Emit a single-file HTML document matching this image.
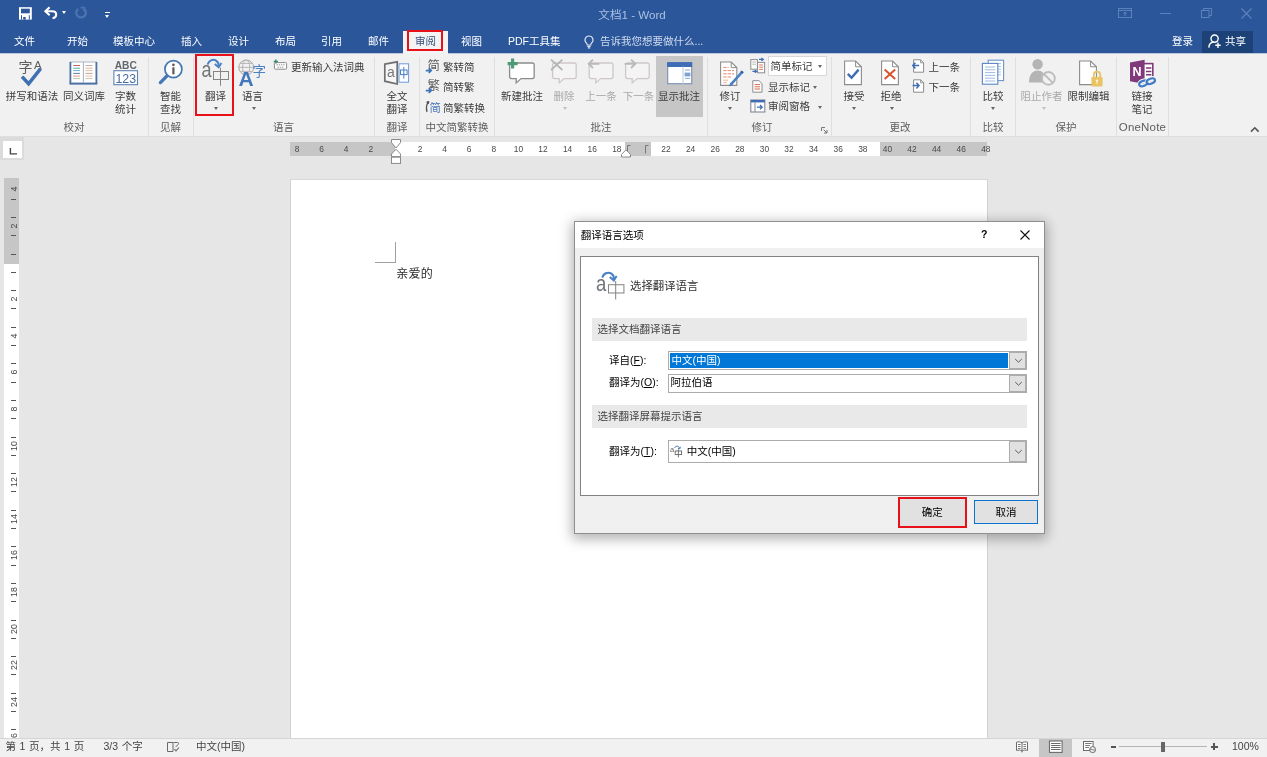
<!DOCTYPE html>
<html lang="zh-CN">
<head>
<meta charset="utf-8">
<title>文档1 - Word</title>
<style>
*{box-sizing:border-box;margin:0;padding:0}
html,body{width:1267px;height:757px;overflow:hidden;background:#e6e6e6}
body{font-family:"Liberation Sans","Noto Sans CJK SC",sans-serif;font-size:10.5px;color:#444;position:relative}
.abs{position:absolute}
#top{position:absolute;left:0;top:0;width:1267px;height:53px;background:#2b579a}
#title{position:absolute;left:532px;top:6px;width:200px;text-align:center;color:#a9c0e3;font-size:11.6px;line-height:17px;white-space:nowrap}
.tab{position:absolute;top:33px;height:16px;line-height:16px;color:#fff;font-size:10.5px;white-space:nowrap}
#tabsel{position:absolute;left:403px;top:30.5px;width:45px;height:24px;background:#f3f3f3}
#ribbon{position:absolute;left:0;top:54px;width:1267px;height:83px;background:#f1f1f1;border-bottom:1px solid #dedede}
.lbl{position:absolute;width:90px;margin-left:-45px;font-size:10.5px;line-height:13px;color:#3b3b3b;white-space:nowrap;text-align:center}
.lbl.dis{color:#a9a9a9}
.sl{position:absolute;font-size:10.5px;line-height:14px;color:#3b3b3b;white-space:nowrap}
.grp{position:absolute;top:120px;width:90px;margin-left:-45px;font-size:10.5px;line-height:14px;color:#5e5e5e;white-space:nowrap;text-align:center}
.sep{position:absolute;top:57px;width:1px;height:79px;background:#dfdfdf}
.red{position:absolute;border:2px solid #e8111a}
.arr{position:absolute;width:0;height:0;margin-left:-2.5px;border-left:2.5px solid transparent;border-right:2.5px solid transparent;border-top:3px solid #666}
.arr.dis{border-top-color:#c0c0c0}
#status{position:absolute;left:0;top:738px;width:1267px;height:19px;background:#f1f1f1;border-top:1px solid #d5d5d5}
#status span{position:absolute;top:-1px;line-height:16px;font-size:10.5px;color:#444;white-space:nowrap;word-spacing:.7px}
#page{position:absolute;left:290px;top:179px;width:698px;height:559px;background:#fff;border-left:1px solid #d2d2d2;border-right:1px solid #d2d2d2;border-top:1px solid #d8d8d8}
svg{position:absolute;overflow:visible}
</style>
</head>
<body>
<div id="wrap" style="position:absolute;left:0;top:0;width:1267px;height:757px;will-change:transform;opacity:.999">
<div id="top"></div>
<div id="title">文档1 - Word</div>
<div id="tabsel"></div>
<div class="tab" style="left:14px">文件</div>
<div class="tab" style="left:67px">开始</div>
<div class="tab" style="left:113px">模板中心</div>
<div class="tab" style="left:181px">插入</div>
<div class="tab" style="left:228px">设计</div>
<div class="tab" style="left:275px">布局</div>
<div class="tab" style="left:321px">引用</div>
<div class="tab" style="left:368px">邮件</div>
<div class="tab" style="left:415px;color:#38507a">审阅</div>
<div class="tab" style="left:461px">视图</div>
<div class="tab" style="left:508px">PDF工具集</div>
<div class="tab" style="left:600px;color:#cfdaee">告诉我您想要做什么...</div>
<div class="tab" style="left:1172px">登录</div>
<div class="abs" style="left:1202px;top:31px;width:51px;height:22px;background:#1d4277"></div>
<div class="tab" style="left:1225px">共享</div>
<div class="red" style="left:407.3px;top:30.2px;width:36.2px;height:20.6px;border-width:2.4px"></div>
<svg style="left:19px;top:7px" width="13" height="13" viewBox="0 0 13 13"><rect x="0" y="0.2" width="12.8" height="12.4" fill="#fff"/><rect x="2" y="1.7" width="8.8" height="4.6" fill="#2b579a"/><rect x="2" y="8.2" width="1" height="4.4" fill="#2b579a"/><rect x="9.8" y="8.2" width="1" height="4.4" fill="#2b579a"/><rect x="4.2" y="10" width="2.5" height="2.6" fill="#2b579a"/></svg>
<svg style="left:44px;top:6px" width="14" height="14" viewBox="0 0 14 14"><path d="M2 5.2H8.2C11 5.2 12.2 7 12.2 8.6C12.2 10.6 10.6 12 8.6 12.2" fill="none" stroke="#fff" stroke-width="2.1"/><path d="M5.6 1.2L1.4 5.2L5.6 9.2" fill="none" stroke="#fff" stroke-width="2.1"/></svg>
<div class="arr" style="left:64.5px;top:11px;border-top-color:#fff"></div>
<svg style="left:75px;top:7px" width="12" height="12" viewBox="0 0 12 12"><path d="M8.6 1.6A4.8 4.8 0 1 1 3.2 1.8" fill="none" stroke="#4d74b0" stroke-width="2.2"/><path d="M5.6 0.6H9.4V4.4" fill="none" stroke="#4d74b0" stroke-width="1.8"/></svg>
<div class="abs" style="left:104.5px;top:12px;width:5px;height:1.3px;background:#fff"></div>
<div class="arr" style="left:107px;top:15px;border-top-color:#fff"></div>
<svg style="left:1118px;top:8px" width="14" height="10" viewBox="0 0 14 10"><rect x="0.5" y="0.5" width="13" height="9" fill="none" stroke="#5c82bd" stroke-width="1"/><path d="M0.5 2.5H13.5" stroke="#5c82bd" stroke-width="1"/><path d="M7 4V8M5.2 5.8L7 4L8.8 5.8" fill="none" stroke="#5c82bd" stroke-width="1"/></svg>
<div class="abs" style="left:1160px;top:13px;width:11px;height:1px;background:#5c82bd"></div>
<svg style="left:1201px;top:8px" width="11" height="10" viewBox="0 0 11 10"><rect x="0.5" y="2.5" width="7.5" height="7" fill="none" stroke="#5c82bd" stroke-width="1"/><path d="M2.5 2.5V0.5H10.5V7.5H8" fill="none" stroke="#5c82bd" stroke-width="1"/></svg>
<svg style="left:1241px;top:8px" width="11" height="11" viewBox="0 0 11 11"><path d="M0.5 0.5L10.5 10.5M10.5 0.5L0.5 10.5" stroke="#5c82bd" stroke-width="1.1"/></svg>
<svg style="left:584px;top:35px" width="10" height="14" viewBox="0 0 10 14"><path d="M5 1A4 4 0 0 0 2.6 8.2C3 8.6 3.2 9.2 3.2 10H6.8C6.8 9.2 7 8.6 7.4 8.2A4 4 0 0 0 5 1Z" fill="none" stroke="#dfe7f4" stroke-width="1.1"/><path d="M3.4 11.4H6.6M3.8 12.9H6.2" stroke="#dfe7f4" stroke-width="1.1"/></svg>
<svg style="left:1208px;top:34px" width="14" height="15" viewBox="0 0 14 15"><circle cx="6.6" cy="4.6" r="3.6" fill="none" stroke="#fff" stroke-width="1.4"/><path d="M0.8 13.6C1 10.4 3 8.4 5.4 8" fill="none" stroke="#fff" stroke-width="1.4"/><path d="M10 8.6V14M7.3 11.3H12.7" stroke="#fff" stroke-width="1.4"/></svg>
<div class="abs" style="left:0;top:53px;width:403px;height:1px;background:#b9c6dc"></div><div class="abs" style="left:448px;top:53px;width:819px;height:1px;background:#b9c6dc"></div>
<div id="ribbon"></div>
<div class="lbl" style="left:32px;top:89.5px">拼写和语法</div>
<div class="lbl" style="left:84px;top:89.5px">同义词库</div>
<div class="lbl" style="left:125.5px;top:89.5px">字数<br>统计</div>
<div class="lbl" style="left:170.5px;top:89.5px">智能<br>查找</div>
<div class="grp" style="left:74px">校对</div>
<div class="grp" style="left:170.5px">见解</div>
<div class="sep" style="left:148px"></div>
<div class="sep" style="left:193px"></div>
<div class="lbl" style="left:215.5px;top:89.5px">翻译</div>
<div class="arr" style="left:216.5px;top:107px"></div>
<div class="lbl" style="left:252.5px;top:89.5px">语言</div>
<div class="arr" style="left:254px;top:107px"></div>
<div class="sl" style="left:291px;top:59.5px">更新输入法词典</div>
<div class="grp" style="left:283.5px">语言</div>
<div class="sep" style="left:374px"></div>
<div class="lbl" style="left:397px;top:89.5px">全文<br>翻译</div>
<div class="grp" style="left:397px">翻译</div>
<div class="sep" style="left:419px"></div>
<div class="sl" style="left:443px;top:59.5px">繁转简</div>
<div class="sl" style="left:443px;top:80px">简转繁</div>
<div class="sl" style="left:443px;top:100.5px">简繁转换</div>
<div class="grp" style="left:457px">中文简繁转换</div>
<div class="sep" style="left:494px"></div>
<div class="lbl" style="left:522px;top:89.5px">新建批注</div>
<div class="lbl dis" style="left:564px;top:89.5px">删除</div>
<div class="arr dis" style="left:565.5px;top:107px"></div>
<div class="lbl dis" style="left:601px;top:89.5px">上一条</div>
<div class="lbl dis" style="left:638.5px;top:89.5px">下一条</div>
<div class="abs" style="left:656px;top:56px;width:47px;height:61px;background:#c6c6c6"></div>
<div class="lbl" style="left:679px;top:89.5px">显示批注</div>
<div class="grp" style="left:601px">批注</div>
<div class="sep" style="left:707px"></div>
<div class="lbl" style="left:730px;top:89.5px">修订</div>
<div class="arr" style="left:730.5px;top:107px"></div>
<div class="abs" style="left:768px;top:56px;width:59px;height:20px;background:#fff;border:1px solid #d8d8d8"></div>
<div class="sl" style="left:770.5px;top:59px">简单标记</div>
<div class="arr" style="left:820.5px;top:65px"></div>
<div class="sl" style="left:768px;top:79.5px">显示标记</div>
<div class="arr" style="left:815px;top:85.5px"></div>
<div class="sl" style="left:768px;top:98.8px">审阅窗格</div>
<div class="arr" style="left:820.5px;top:105.5px"></div>
<div class="grp" style="left:762px">修订</div>
<div class="sep" style="left:831px"></div>
<div class="lbl" style="left:854px;top:89.5px">接受</div>
<div class="arr" style="left:854.5px;top:107px"></div>
<div class="lbl" style="left:891px;top:89.5px">拒绝</div>
<div class="arr" style="left:892px;top:107px"></div>
<div class="sl" style="left:928.5px;top:59.5px">上一条</div>
<div class="sl" style="left:928.5px;top:80px">下一条</div>
<div class="grp" style="left:900px">更改</div>
<div class="sep" style="left:970px"></div>
<div class="lbl" style="left:993px;top:89.5px">比较</div>
<div class="arr" style="left:993.5px;top:107px"></div>
<div class="grp" style="left:993px">比较</div>
<div class="sep" style="left:1015px"></div>
<div class="lbl dis" style="left:1041.5px;top:89.5px">阻止作者</div>
<div class="arr dis" style="left:1044px;top:107px"></div>
<div class="lbl" style="left:1088.5px;top:89.5px">限制编辑</div>
<div class="grp" style="left:1066px">保护</div>
<div class="sep" style="left:1116px"></div>
<div class="lbl" style="left:1142px;top:89.5px">链接<br>笔记</div>
<div class="grp" style="left:1142.5px;font-size:11.5px;letter-spacing:.2px">OneNote</div>
<div class="sep" style="left:1168px"></div>
<div class="red" style="left:195.4px;top:54.3px;width:38.6px;height:61.4px;border-width:2.2px"></div>
<svg style="left:18px;top:58px" width="28" height="30" viewBox="0 0 28 30"><text x="0.4" y="13.6" font-family='"Liberation Sans","Noto Sans CJK SC",sans-serif' font-size="14" fill="#5e5e5e">字</text><text x="16" y="10.6" font-family='"Liberation Sans","Noto Sans CJK SC",sans-serif' font-size="11.5" fill="#5e5e5e">A</text><path d="M4 18.6L10.6 25.8L22.6 10.6" fill="none" stroke="#3f70b2" stroke-width="3.5"/></svg>
<svg style="left:69px;top:61px" width="29" height="25" viewBox="0 0 29 25"><rect x="1.4" y="1" width="26" height="21.4" fill="#fff" stroke="#9aa7b8" stroke-width="0.8"/><path d="M1.4 1V22.6M27.4 1V22.6" stroke="#4a70a4" stroke-width="1.8"/><path d="M0.5 22.6H28.3" stroke="#4a70a4" stroke-width="2"/><path d="M14.4 1V22" stroke="#a8b0bc" stroke-width="1"/>
<g stroke-width="0.9"><path d="M4.2 4.5H11" stroke="#c0504d"/><path d="M4.2 7.2H11" stroke="#3fa6a0"/><path d="M4.2 9.6H11" stroke="#4bacc6"/><path d="M4.2 12.4H11" stroke="#4f6fa8"/><path d="M4.2 15.1H11" stroke="#d98a7a"/><path d="M4.2 17.6H11" stroke="#a8c098"/>
<path d="M16.4 4.5H23.6" stroke="#b8a8a0"/><path d="M16.4 7.2H23.6" stroke="#d8b090"/><path d="M16.4 9.6H23.6" stroke="#d8b8a0"/><path d="M16.4 12.4H23.6" stroke="#b89888"/><path d="M16.4 15.1H23.6" stroke="#e0b8a0"/><path d="M16.4 17.6H23.6" stroke="#c8c0b0"/></g></svg>
<svg style="left:113px;top:59px" width="26" height="27" viewBox="0 0 26 27"><text x="12.8" y="9.8" text-anchor="middle" font-family='"Liberation Sans","Noto Sans CJK SC",sans-serif' font-weight="bold" font-size="10.2" fill="#62666e">ABC</text><rect x="0.9" y="11.7" width="23.6" height="14" fill="#fff" stroke="#5f83b3" stroke-width="1.1"/><text x="12.8" y="23.6" text-anchor="middle" font-family='"Liberation Sans","Noto Sans CJK SC",sans-serif' font-size="12.4" fill="#466a9c">123</text></svg>
<svg style="left:157px;top:58px" width="28" height="28" viewBox="0 0 28 28"><path d="M10 17.8L3.4 24.6" stroke="#4577b4" stroke-width="3.3" stroke-linecap="round"/><circle cx="16.4" cy="11.2" r="8.5" fill="#fff" stroke="#4577b4" stroke-width="1.7"/><circle cx="16.4" cy="6.8" r="1.35" fill="#5a5a5a"/><rect x="15.3" y="9.3" width="2.2" height="7" fill="#5a5a5a"/></svg>
<svg style="left:201px;top:57px" width="30" height="30" viewBox="0 0 30 30"><text transform="translate(0.4 20.2) scale(0.84 1)" font-family='"Liberation Sans","Noto Sans CJK SC",sans-serif' font-size="21.5" fill="#70757a">a</text><path d="M6.6 7.6C7.4 3.6 12 1.6 15.4 3.8C17.2 5 17.9 7 17.7 9.4" fill="none" stroke="#4a80c4" stroke-width="2"/><path d="M13.8 7L17.7 10.4L20.4 6" fill="none" stroke="#4a80c4" stroke-width="1.9"/><rect x="12.5" y="14.5" width="15" height="8" fill="none" stroke="#858585" stroke-width="1"/><path d="M19.5 10.8V28.8" stroke="#858585" stroke-width="1"/></svg>
<svg style="left:238px;top:58px" width="30" height="29" viewBox="0 0 30 29"><circle cx="8.2" cy="9.4" r="7.4" fill="#f1f1f1" stroke="#a6a6a6" stroke-width="1"/><path d="M0.8 9.4H15.6M2.4 5.4H14M2.4 13.4H14" stroke="#b0b0b0" stroke-width="0.9" fill="none"/><ellipse cx="8.2" cy="9.4" rx="3.6" ry="7.4" fill="none" stroke="#b0b0b0" stroke-width="0.9"/><text x="14.4" y="17.8" font-family='"Liberation Sans","Noto Sans CJK SC",sans-serif' font-size="13.5" fill="#4a80c4">字</text><text x="0.4" y="27.6" font-family='"Liberation Sans","Noto Sans CJK SC",sans-serif' font-weight="bold" font-size="21" fill="#4478bc">A</text></svg>
<svg style="left:272px;top:59px" width="16" height="12" viewBox="0 0 16 12"><rect x="2.4" y="3.6" width="12.2" height="6.6" rx="1" fill="#fff" stroke="#8a8a8a" stroke-width="1"/><path d="M4.6 5.8H12.6M5.6 8.2H11.6" stroke="#8a8a8a" stroke-width="0.9" stroke-dasharray="1.4 0.8"/><path d="M3.8 0.4V4.6M1.7 2.5H5.9" stroke="#3a8a6a" stroke-width="1.4"/></svg>
<svg style="left:383px;top:60px" width="27" height="26" viewBox="0 0 27 26"><path d="M1.8 4.2L14.2 1.8V24L1.8 21.2Z" fill="#f6f6f6" stroke="#707070" stroke-width="1.7"/><text x="4" y="17.2" font-family='"Liberation Sans","Noto Sans CJK SC",sans-serif' font-size="14" fill="#777">a</text><rect x="16" y="3.8" width="9.6" height="18.4" fill="#fbfdff" stroke="#6f9bd6" stroke-width="1"/><rect x="17.5" y="10" width="6.6" height="4.6" fill="none" stroke="#4a80c4" stroke-width="1"/><path d="M20.8 7V18.6" stroke="#4a80c4" stroke-width="1"/></svg>
<svg style="left:425px;top:59px" width="16" height="14" viewBox="0 0 16 14"><text x="2.4" y="11" font-family='"Liberation Sans","Noto Sans CJK SC",sans-serif' font-size="12.4" fill="#5c5c5c">简</text><path d="M0.8 11.6H6M3.8 9.2L6.2 11.6L3.8 14" fill="none" stroke="#3f74b8" stroke-width="1.7"/></svg>
<svg style="left:425px;top:79px" width="16" height="14" viewBox="0 0 16 14"><text x="2.4" y="11" font-family='"Liberation Sans","Noto Sans CJK SC",sans-serif' font-size="12.4" fill="#5c5c5c">繁</text><path d="M0.8 11.6H6M3.8 9.2L6.2 11.6L3.8 14" fill="none" stroke="#3f74b8" stroke-width="1.7"/></svg>
<svg style="left:425px;top:100px" width="16" height="14" viewBox="0 0 16 14"><text x="4.6" y="12" font-family='"Liberation Sans","Noto Sans CJK SC",sans-serif' font-size="11.4" fill="#4a78b8">简</text><path d="M2.6 3C1.2 5.8 1 9 2 12" fill="none" stroke="#555" stroke-width="1.2"/><path d="M1.6 2L4 1.4L3.4 3.8Z" fill="#444" stroke="#444" stroke-width="0.8"/></svg>
<svg style="left:507px;top:58px" width="30" height="28" viewBox="0 0 30 28"><path d="M4.6 5H25.200000000000003Q27.200000000000003 5 27.200000000000003 7V18.6Q27.200000000000003 20.6 25.200000000000003 20.6H14.1L9.2 24.9V20.6H4.6Q2.6 20.6 2.6 18.6V7Q2.6 5 4.6 5Z" fill="#fff" stroke="#8c8c8c" stroke-width="1.3"/><path d="M5.6 0.6V10.6M0.6 5.6H10.6" stroke="#4f9a76" stroke-width="3.2"/></svg>
<svg style="left:550px;top:58px" width="30" height="28" viewBox="0 0 30 28"><path d="M4.6 5H24.200000000000003Q26.200000000000003 5 26.200000000000003 7V18.6Q26.200000000000003 20.6 24.200000000000003 20.6H14.1L9.2 24.9V20.6H4.6Q2.6 20.6 2.6 18.6V7Q2.6 5 4.6 5Z" fill="#f4f4f4" stroke="#cfc8c8" stroke-width="1.3"/><path d="M1 1.6L12.4 12M12.4 1.6L1 12" stroke="#b5b5b5" stroke-width="1.7"/></svg>
<svg style="left:587px;top:58px" width="30" height="28" viewBox="0 0 30 28"><path d="M4.2 5H24.0Q26.0 5 26.0 7V18.6Q26.0 20.6 24.0 20.6H13.7L8.8 24.9V20.6H4.2Q2.2 20.6 2.2 18.6V7Q2.2 5 4.2 5Z" fill="#f4f4f4" stroke="#cfc8c8" stroke-width="1.3"/><path d="M1.6 5.8H12.4M6 1.6L1.6 5.8L6 10" fill="none" stroke="#b9b9b9" stroke-width="1.8"/></svg>
<svg style="left:623px;top:58px" width="30" height="28" viewBox="0 0 30 28"><path d="M4.6 5H24.200000000000003Q26.200000000000003 5 26.200000000000003 7V18.6Q26.200000000000003 20.6 24.200000000000003 20.6H14.1L9.2 24.9V20.6H4.6Q2.6 20.6 2.6 18.6V7Q2.6 5 4.6 5Z" fill="#f4f4f4" stroke="#cfc8c8" stroke-width="1.3"/><path d="M1.6 5.8H12.4M8 1.6L12.4 5.8L8 10" fill="none" stroke="#b9b9b9" stroke-width="1.8"/></svg>
<svg style="left:667px;top:62px" width="26" height="23" viewBox="0 0 26 23"><rect x="0.7" y="0.7" width="24" height="21" fill="#fff" stroke="#7a90b4" stroke-width="1.1"/><rect x="0.7" y="0.7" width="24" height="3.8" fill="#3e6db5" stroke="#3e6db5" stroke-width="1"/><path d="M16 4.5V22" stroke="#b8c8e0" stroke-width="1"/><path d="M18 8H23M18 16.4H23" stroke="#7d9bc8" stroke-width="0.9"/><rect x="17.6" y="10.6" width="5.8" height="3.8" fill="#7ea1d6"/></svg>
<svg style="left:719px;top:61px" width="27" height="28" viewBox="0 0 27 28"><path d="M1.6 1H12.2L17.8 6.6V24.4H1.6Z" fill="#fff" stroke="#8c8c8c" stroke-width="1.1"/><path d="M12.2 1V6.6H17.8" fill="none" stroke="#8c8c8c" stroke-width="1"/><path d="M4.2 6.4H9.6M4.2 9.6H15M4.2 12.8H15M4.2 16H12" stroke="#e68a6c" stroke-width="1" stroke-dasharray="3.4 1"/><path d="M4.2 19.2H9M4.2 21.6H8" stroke="#f0a890" stroke-width="0.9"/><path d="M22.8 11.4L12.4 22.8" stroke="#4580c4" stroke-width="2.5"/><path d="M11.4 21.6L10 25.6L13.8 23.8Z" fill="#4379bd"/><path d="M23.8 10.3L22.4 11.9" stroke="#2f5a9c" stroke-width="2.8"/></svg>
<svg style="left:750px;top:58px" width="16" height="16" viewBox="0 0 16 16"><rect x="0.8" y="1.6" width="6.6" height="9.6" fill="#fff" stroke="#8c8c8c" stroke-width="1"/><rect x="7.6" y="4.4" width="7" height="10.4" fill="#fff" stroke="#8c8c8c" stroke-width="1"/><path d="M9.2 7H13M9.2 9.2H13M9.2 11.4H13" stroke="#d9694b" stroke-width="0.9"/><path d="M2.2 4H6M2.2 6.2H6" stroke="#aaa" stroke-width="0.8"/><path d="M9 1.4H13.2M11.4 0L13.4 1.4L11.4 2.8" fill="none" stroke="#3e6db5" stroke-width="1.1"/><path d="M2.4 13.4H6.6M4.8 12L6.8 13.4L4.8 14.8" fill="none" stroke="#3e6db5" stroke-width="1.1"/></svg>
<svg style="left:752px;top:80px" width="11" height="13" viewBox="0 0 11 13"><path d="M0.8 0.7H7L10 3.6V12.2H0.8Z" fill="#fff" stroke="#8c8c8c" stroke-width="1"/><path d="M2.6 4.6H8M2.6 6.8H8M2.6 9H8" stroke="#d9694b" stroke-width="1"/></svg>
<svg style="left:750px;top:99px" width="16" height="14" viewBox="0 0 16 14"><rect x="0.8" y="1" width="14" height="12" fill="#fff" stroke="#808894" stroke-width="1.1"/><rect x="0.8" y="1" width="14" height="2.4" fill="#3e6db5"/><path d="M5 3.4V13" stroke="#808894" stroke-width="1"/><path d="M7 8.2H12M10 6L12.2 8.2L10 10.4" fill="none" stroke="#3e6db5" stroke-width="1.3"/></svg>
<svg style="left:843px;top:60px" width="20" height="26" viewBox="0 0 20 26"><path d="M1.6 1H12.6L18.4 6.8V24.6H1.6Z" fill="#fff" stroke="#8c8c8c" stroke-width="1.1"/><path d="M12.6 1V6.8H18.4" fill="none" stroke="#8c8c8c" stroke-width="1"/><path d="M4.8 13.8L8.6 17.8L15.6 9.6" fill="none" stroke="#3e6db5" stroke-width="2.4"/></svg>
<svg style="left:880px;top:60px" width="20" height="26" viewBox="0 0 20 26"><path d="M1.6 1H12.6L18.4 6.8V24.6H1.6Z" fill="#fff" stroke="#8c8c8c" stroke-width="1.1"/><path d="M12.6 1V6.8H18.4" fill="none" stroke="#8c8c8c" stroke-width="1"/><path d="M4.6 9.6L15.2 19M15.2 9.6L4.6 19" fill="none" stroke="#d9532c" stroke-width="2"/></svg>
<svg style="left:912px;top:59px" width="13" height="14" viewBox="0 0 13 14"><path d="M1.6 0.8H8.6L11.6 3.8V13.2H1.6Z" fill="#fff" stroke="#8c8c8c" stroke-width="1"/><path d="M8.6 0.8V3.8H11.6" fill="none" stroke="#8c8c8c" stroke-width="0.9"/><path d="M0.8 6.6H7.2M3.4 3.8L0.8 6.6L3.4 9.4" fill="none" stroke="#3e6db5" stroke-width="1.5"/></svg>
<svg style="left:912px;top:79px" width="13" height="14" viewBox="0 0 13 14"><path d="M1.6 0.8H8.6L11.6 3.8V13.2H1.6Z" fill="#fff" stroke="#8c8c8c" stroke-width="1"/><path d="M8.6 0.8V3.8H11.6" fill="none" stroke="#8c8c8c" stroke-width="0.9"/><path d="M0.6 6.6H7M4.4 3.8L7 6.6L4.4 9.4" fill="none" stroke="#3e6db5" stroke-width="1.5"/></svg>
<svg style="left:981px;top:59px" width="25" height="27" viewBox="0 0 25 27"><rect x="7.2" y="1.2" width="15.4" height="20.4" fill="#fff" stroke="#6f93c8" stroke-width="1.1"/><path d="M10 4.6H20M10 7.4H20M10 10.2H20M10 13H20M10 15.8H20" stroke="#9cb8de" stroke-width="0.9"/><rect x="1.4" y="4.4" width="15.4" height="20.8" fill="#fff" stroke="#5a86c4" stroke-width="1.1"/><path d="M4 8H14.2M4 10.8H14.2M4 13.6H14.2M4 16.4H14.2M4 19.2H14.2M4 22H14.2" stroke="#93b3e0" stroke-width="0.9"/></svg>
<svg style="left:1028px;top:58px" width="30" height="28" viewBox="0 0 30 28"><circle cx="9.6" cy="6.2" r="5.2" fill="#b4b4b4"/><path d="M1 24.6C1 16.6 4.6 12.6 9.6 12.6C14.6 12.6 18.2 16.6 18.2 24.6Z" fill="#b4b4b4"/><circle cx="20.4" cy="20.4" r="6.4" fill="#f1f1f1" stroke="#bdbdbd" stroke-width="1.9"/><path d="M16 16L24.8 24.8" stroke="#bdbdbd" stroke-width="1.9"/></svg>
<svg style="left:1078px;top:60px" width="27" height="28" viewBox="0 0 27 28"><path d="M1.6 1H12.6L18.4 6.8V24.6H1.6Z" fill="#fff" stroke="#8c8c8c" stroke-width="1.1"/><path d="M12.6 1V6.8H18.4" fill="none" stroke="#8c8c8c" stroke-width="1"/><rect x="13.4" y="17" width="11.2" height="9.6" rx="0.8" fill="#e9c464"/><path d="M15.8 17V14.8A3.2 3.2 0 0 1 22.2 14.8V17" fill="none" stroke="#e9c464" stroke-width="1.8"/><circle cx="19" cy="20.6" r="1.2" fill="#fff6d8"/><rect x="18.5" y="20.8" width="1" height="3" fill="#fff6d8"/></svg>
<svg style="left:1129px;top:59px" width="29" height="30" viewBox="0 0 29 30"><rect x="12" y="4.6" width="11.8" height="17" fill="#fff" stroke="#80397b" stroke-width="1.6"/><path d="M17 9H22.4M17 12.4H22.4M17 15.8H22.4" stroke="#80397b" stroke-width="1.5"/><path d="M1 3.6L15.6 0.8V25L1 22.2Z" fill="#80397b"/><text x="3.6" y="17.4" font-family='"Liberation Sans","Noto Sans CJK SC",sans-serif' font-weight="bold" font-size="12.5" fill="#fff">N</text><g fill="none" stroke="#f1f1f1" stroke-width="4.6"><ellipse cx="14.4" cy="24.4" rx="4.4" ry="2.5" transform="rotate(-22 14.4 24.4)"/><ellipse cx="21.8" cy="22.2" rx="4.4" ry="2.5" transform="rotate(-22 21.8 22.2)"/></g><g fill="none" stroke="#3c7ac4" stroke-width="2.1"><ellipse cx="14.4" cy="24.4" rx="4.4" ry="2.5" transform="rotate(-22 14.4 24.4)"/></g><g fill="none" stroke="#f1f1f1" stroke-width="3.6"><path d="M17.6 23.6A4.4 2.5 -22 0 1 21 20"/></g><g fill="none" stroke="#3c7ac4" stroke-width="2.1"><ellipse cx="21.8" cy="22.2" rx="4.4" ry="2.5" transform="rotate(-22 21.8 22.2)"/></g></svg>
<svg style="left:1250px;top:126px" width="10" height="7" viewBox="0 0 10 7"><path d="M1 5.6L4.8 1.8L8.6 5.6" fill="none" stroke="#555" stroke-width="1.6"/></svg>
<svg style="left:821px;top:127px" width="7" height="7" viewBox="0 0 7 7"><path d="M0.5 4V0.5H4" fill="none" stroke="#777" stroke-width="1"/><path d="M2.6 2.6L6 6M6 3V6H3" fill="none" stroke="#777" stroke-width="1"/></svg>
<div class="abs" style="left:0;top:137px;width:24px;height:23px;background:#dbdbdb"></div>
<div class="abs" style="left:3px;top:141px;width:19px;height:17px;background:#fff"></div>
<svg style="left:9px;top:148px" width="8" height="7"><path d="M1.4 0V5.9H8" fill="none" stroke="#444" stroke-width="1.4"/></svg>
<div class="abs" style="left:290px;top:142px;width:697px;height:14px;background:#fff"></div>
<div class="abs" style="left:290px;top:142px;width:105px;height:14px;background:#c6c6c6"></div>
<div class="abs" style="left:880px;top:142px;width:107px;height:14px;background:#c6c6c6"></div>
<div class="abs" style="left:625px;top:142px;width:26px;height:14px;background:#c6c6c6"></div>
<style>.rn{position:absolute;top:144px;width:20px;margin-left:-10px;text-align:center;font-size:8.4px;line-height:10px;color:#4a4a4a}.vn{position:absolute;left:3.6px;width:20px;height:10px;margin-top:-5.7px;text-align:center;font-size:8.8px;line-height:10px;color:#444;transform:rotate(-90deg)}.vt{position:absolute;left:11px;width:5px;height:1px;background:#555}</style>
<div class="rn" style="left:297.0px">8</div>
<div class="rn" style="left:321.6px">6</div>
<div class="rn" style="left:346.2px">4</div>
<div class="rn" style="left:370.8px">2</div>
<div class="rn" style="left:420.0px">2</div>
<div class="rn" style="left:444.6px">4</div>
<div class="rn" style="left:469.2px">6</div>
<div class="rn" style="left:493.8px">8</div>
<div class="rn" style="left:518.4px">10</div>
<div class="rn" style="left:543.0px">12</div>
<div class="rn" style="left:567.6px">14</div>
<div class="rn" style="left:592.2px">16</div>
<div class="rn" style="left:616.8px">18</div>
<div class="rn" style="left:666.0px">22</div>
<div class="rn" style="left:690.6px">24</div>
<div class="rn" style="left:715.2px">26</div>
<div class="rn" style="left:739.8px">28</div>
<div class="rn" style="left:764.4px">30</div>
<div class="rn" style="left:789.0px">32</div>
<div class="rn" style="left:813.6px">34</div>
<div class="rn" style="left:838.2px">36</div>
<div class="rn" style="left:862.8px">38</div>
<div class="rn" style="left:887.4px">40</div>
<div class="rn" style="left:912.0px">42</div>
<div class="rn" style="left:936.6px">44</div>
<div class="rn" style="left:961.2px">46</div>
<div class="rn" style="left:985.8px">48</div>
<svg style="left:625px;top:142px" width="26" height="14"><path d="M5.5 3.5H2.5V11.5M23.5 3.5H20.5V11.5" fill="none" stroke="#777" stroke-width="1"/></svg>
<svg style="left:391px;top:139px" width="10" height="26"><path d="M0.5 0.5H9.5V3.6L5 9L0.5 3.6Z" fill="#fff" stroke="#8a8a8a" stroke-width="1"/><path d="M5 10.2L9.5 15V17.6H0.5V15Z" fill="#fff" stroke="#8a8a8a" stroke-width="1"/><rect x="0.5" y="18.2" width="9" height="6.2" fill="#fff" stroke="#8a8a8a" stroke-width="1"/></svg>
<svg style="left:621px;top:149px" width="10" height="9"><path d="M5 0.8L9.5 5.4V8H0.5V5.4Z" fill="#fff" stroke="#8a8a8a" stroke-width="1"/></svg>
<div class="abs" style="left:4px;top:178px;width:15px;height:560px;background:#fff"></div>
<div class="abs" style="left:4px;top:178px;width:15px;height:86px;background:#c6c6c6"></div>
<div class="vn" style="top:190.0px">4</div>
<div class="vt" style="top:198.7px"></div>
<div class="vt" style="top:216.9px"></div>
<div class="vn" style="top:226.6px">2</div>
<div class="vt" style="top:235.2px"></div>
<div class="vt" style="top:253.6px"></div>
<div class="vt" style="top:271.8px"></div>
<div class="vt" style="top:290.1px"></div>
<div class="vn" style="top:299.8px">2</div>
<div class="vt" style="top:308.4px"></div>
<div class="vt" style="top:326.8px"></div>
<div class="vn" style="top:336.4px">4</div>
<div class="vt" style="top:345.0px"></div>
<div class="vt" style="top:363.3px"></div>
<div class="vn" style="top:373.0px">6</div>
<div class="vt" style="top:381.6px"></div>
<div class="vt" style="top:399.9px"></div>
<div class="vn" style="top:409.6px">8</div>
<div class="vt" style="top:418.2px"></div>
<div class="vt" style="top:436.6px"></div>
<div class="vn" style="top:446.2px">10</div>
<div class="vt" style="top:454.8px"></div>
<div class="vt" style="top:473.1px"></div>
<div class="vn" style="top:482.8px">12</div>
<div class="vt" style="top:491.4px"></div>
<div class="vt" style="top:509.8px"></div>
<div class="vn" style="top:519.4px">14</div>
<div class="vt" style="top:528.0px"></div>
<div class="vt" style="top:546.4px"></div>
<div class="vn" style="top:556.0px">16</div>
<div class="vt" style="top:564.6px"></div>
<div class="vt" style="top:583.0px"></div>
<div class="vn" style="top:592.6px">18</div>
<div class="vt" style="top:601.2px"></div>
<div class="vt" style="top:619.6px"></div>
<div class="vn" style="top:629.2px">20</div>
<div class="vt" style="top:637.9px"></div>
<div class="vt" style="top:656.2px"></div>
<div class="vn" style="top:665.8px">22</div>
<div class="vt" style="top:674.4px"></div>
<div class="vt" style="top:692.8px"></div>
<div class="vn" style="top:702.4px">24</div>
<div class="vt" style="top:711.1px"></div>
<div class="vt" style="top:729.4px"></div>
<div class="vn" style="top:739.0px">26</div>


<div id="page"></div>
<div class="abs" style="left:375px;top:262px;width:21px;height:1px;background:#a0a0a0"></div>
<div class="abs" style="left:395px;top:242px;width:1px;height:21px;background:#a0a0a0"></div>
<div class="abs" style="left:396.3px;top:266.3px;font-size:12px;line-height:17px;color:#2a2a2a;white-space:nowrap;letter-spacing:0.25px">亲爱的</div>
<div id="status">
<span style="left:5.5px">第 1 页，共 1 页</span>
<span style="left:103.5px">3/3 个字</span>
<span style="left:196px">中文(中国)</span>
<span style="left:1232px">100%</span>
</div>
<svg style="left:167px;top:741px" width="13" height="12"><path d="M6 1.5H0.5V10.5H6" fill="none" stroke="#6a6a6a" stroke-width="1"/><path d="M6 1.5V10.5" stroke="#6a6a6a" stroke-width="1"/><path d="M6.6 1.5H10.6C11.6 1.5 12 2.5 11.2 3.3L8.6 6.1" fill="none" stroke="#6a6a6a" stroke-width="1"/><path d="M7.4 8.1L9 9.9L12 6.5" fill="none" stroke="#6a6a6a" stroke-width="1.1"/></svg>
<svg style="left:1016px;top:741px" width="12" height="12"><path d="M0.5 1.2C2.4 0.6 4.4 0.8 6 1.8C7.6 0.8 9.6 0.6 11.5 1.2V9.4C9.6 8.8 7.6 9 6 10C4.4 9 2.4 8.8 0.5 9.4Z" fill="#fff" stroke="#6a6a6a" stroke-width="1"/><path d="M6 1.8V11.4" stroke="#6a6a6a" stroke-width="1"/><path d="M2 3.5H4.6M2 5.5H4.6M2 7.5H4.6M7.4 3.5H10M7.4 5.5H10M7.4 7.5H10" stroke="#6a6a6a" stroke-width="0.9"/></svg>
<div class="abs" style="left:1039px;top:739px;width:33px;height:18px;background:#c6c6c6"></div>
<svg style="left:1049px;top:740px" width="14" height="13"><rect x="0.5" y="1" width="12.6" height="11.4" fill="#fff" stroke="#6a6a6a" stroke-width="1.1"/><path d="M2 3.5H11.6M2 5.5H11.6M2 7.5H11.6M2 9.5H11.6" stroke="#6a6a6a" stroke-width="1"/></svg>
<svg style="left:1083px;top:741px" width="13" height="12"><rect x="0.5" y="0.5" width="9.6" height="9" fill="#fff" stroke="#6a6a6a" stroke-width="1"/><path d="M2.2 2.5H8.6M2.2 4.5H7M2.2 6.5H6" stroke="#6a6a6a" stroke-width="0.9"/><circle cx="9.6" cy="8.6" r="3" fill="#f1f1f1" stroke="#6a6a6a" stroke-width="1"/><path d="M7 8.2C8.4 7.6 9.6 9.6 11.8 8.8" fill="none" stroke="#6a6a6a" stroke-width="0.9"/></svg>
<div class="abs" style="left:1110.5px;top:746px;width:5.5px;height:1.6px;background:#555"></div>
<div class="abs" style="left:1119px;top:746px;width:88px;height:1px;background:#b4b4b4"></div>
<div class="abs" style="left:1161px;top:742px;width:4px;height:10px;background:#666"></div>
<div class="abs" style="left:1210.6px;top:746px;width:7.2px;height:1.6px;background:#555"></div>
<div class="abs" style="left:1213.4px;top:743.2px;width:1.6px;height:7.2px;background:#555"></div>



<style>
#dlg{position:absolute;left:574px;top:221px;width:471px;height:313px;background:#f0f0f0;border:1px solid #8f8f8f;box-shadow:0 3px 12px 2px rgba(0,0,0,.30)}
#dlg .tb{position:absolute;left:0;top:0;width:469px;height:26px;background:#fff}
#dlg .t{position:absolute;white-space:nowrap;font-size:10.5px;line-height:14px;color:#000}
#dlg .panel{position:absolute;left:5px;top:34px;width:459px;height:240px;background:#fff;border:1px solid #828282}
#dlg .sh{position:absolute;left:17px;width:435px;height:22.8px;background:#e9e9e9}
#dlg .cb{position:absolute;left:93px;width:359px;background:#fff;border:1px solid #acacac}
#dlg .dd{position:absolute;right:0;top:0;width:17px;height:100%;background:#e1e1e1;border:1px solid #adadad}
#dlg .btn{position:absolute;background:#e1e1e1;text-align:center;font-size:10.5px;color:#000}
</style>
<div id="dlg">
 <div class="tb"></div>
 <div class="t" style="left:5.8px;top:5.5px">翻译语言选项</div>
 <div class="t" style="left:406px;top:5px;font-size:10.5px;font-weight:bold">?</div>
 <svg style="left:445px;top:8px" width="10" height="10"><path d="M0.5 0.5L9.5 9.5M9.5 0.5L0.5 9.5" stroke="#111" stroke-width="1.1" fill="none"/></svg>
 <div class="panel"></div>
 <svg style="left:20px;top:47px" width="32" height="32" viewBox="0 0 32 32"><g transform="translate(0.6 0.8) scale(1.03)"><text transform="translate(0.4 20.2) scale(0.84 1)" font-family='"Liberation Sans","Noto Sans CJK SC",sans-serif' font-size="21.5" fill="#70757a">a</text><path d="M6.6 7.6C7.4 3.6 12 1.6 15.4 3.8C17.2 5 17.9 7 17.7 9.4" fill="none" stroke="#4a80c4" stroke-width="2"/><path d="M13.8 7L17.7 10.4L20.4 6" fill="none" stroke="#4a80c4" stroke-width="1.9"/><rect x="12.5" y="14.5" width="15" height="8" fill="none" stroke="#858585" stroke-width="1"/><path d="M19.5 10.8V28.8" stroke="#858585" stroke-width="1"/></g></svg>

 <div class="t" style="left:55px;top:57px;color:#333;font-size:11.4px">选择翻译语言</div>
 <div class="sh" style="top:96.4px"></div>
 <div class="t" style="left:22.5px;top:100.2px;color:#444">选择文档翻译语言</div>
 <div class="t" style="left:34px;top:131.3px">译自(<u>F</u>):</div>
 <div class="cb" style="top:129px;height:19px"><div style="position:absolute;left:1px;top:1px;right:18px;bottom:1px;background:#0078d7"></div><div class="dd"><svg style="left:3.5px;top:50%;margin-top:-2.5px" width="9" height="6" viewBox="0 0 9 6"><path d="M1.2 1L4.5 4.2L7.8 1" fill="none" stroke="#5a5a5a" stroke-width="1"/></svg></div></div>
 <div class="t" style="left:96.5px;top:131.3px;color:#fff">中文(中国)</div>
 <div class="t" style="left:34px;top:152.7px">翻译为(<u>O</u>):</div>
 <div class="cb" style="top:151.5px;height:19.3px"><div class="dd"><svg style="left:3.5px;top:50%;margin-top:-2.5px" width="9" height="6" viewBox="0 0 9 6"><path d="M1.2 1L4.5 4.2L7.8 1" fill="none" stroke="#5a5a5a" stroke-width="1"/></svg></div></div>
 <div class="t" style="left:95.6px;top:152.7px">阿拉伯语</div>
 <div class="sh" style="top:183.2px"></div>
 <div class="t" style="left:22.5px;top:187px;color:#444">选择翻译屏幕提示语言</div>
 <div class="t" style="left:34px;top:221.6px">翻译为(<u>T</u>):</div>
 <div class="cb" style="top:218.2px;height:22.8px"><div class="dd"><svg style="left:3.5px;top:50%;margin-top:-2.5px" width="9" height="6" viewBox="0 0 9 6"><path d="M1.2 1L4.5 4.2L7.8 1" fill="none" stroke="#5a5a5a" stroke-width="1"/></svg></div></div>
 <svg style="left:95px;top:223px" width="13" height="13" viewBox="0 0 13 13"><text x="0" y="7" font-family='"Liberation Sans","Noto Sans CJK SC",sans-serif' font-size="7.5" fill="#666">a</text><path d="M4.6 2.8C5.8 0.6 8.6 0.8 9.6 3" fill="none" stroke="#3e6db5" stroke-width="1"/><path d="M8 3.4L10 3.8L10.4 1.8" fill="none" stroke="#3e6db5" stroke-width="0.9"/><rect x="5.2" y="6" width="6.4" height="3.6" fill="none" stroke="#666" stroke-width="0.9"/><path d="M8.4 4.4V12.4" stroke="#666" stroke-width="0.9"/></svg>
 <div class="t" style="left:111.7px;top:221.6px">中文(中国)</div>
 <div class="btn" style="left:323px;top:275px;width:68.5px;height:30.5px;border:2.4px solid #e8111a;line-height:27.6px">确定</div>
 <div class="btn" style="left:398.8px;top:278px;width:64.5px;height:23.8px;border:1.8px solid #0a74d0;line-height:22.2px">取消</div>
</div>

</div></body>
</html>
